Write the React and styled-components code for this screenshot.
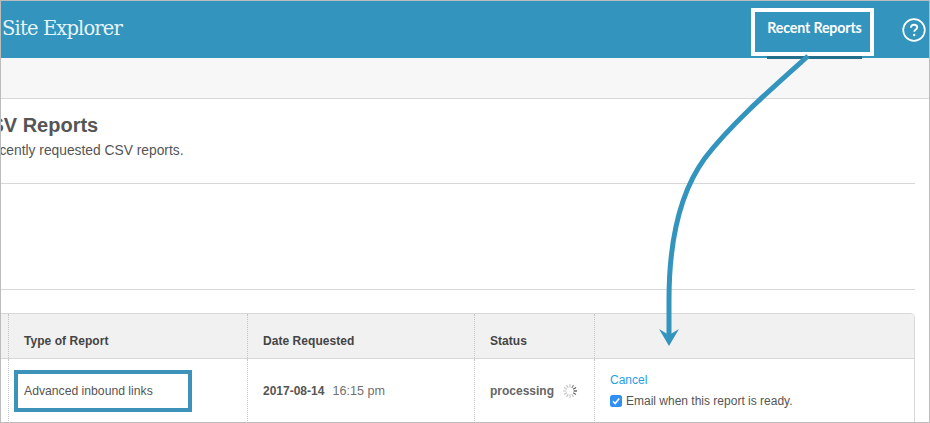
import React from "react";
import styled, { createGlobalStyle } from "styled-components";

const Global = createGlobalStyle`
  html, body { margin: 0; padding: 0; background: #fff; }
  body { font-family: "Liberation Sans", Arial, sans-serif; color: #555; }
`;

const Frame = styled.div`
  position: relative;
  box-sizing: border-box;
  width: 930px;
  height: 423px;
  border: 1px solid #bcbcbc;
  overflow: hidden;
  background: #fff;
`;

const Header = styled.header`
  display: flex;
  align-items: center;
  height: 57px;
  padding: 0 3px 0 1px;
  background: #3394bd;
  color: #fff;
`;

const Brand = styled.div`
  flex: 1;
  font-family: "DejaVu Serif", "Liberation Serif", serif;
  font-size: 19.5px;
  letter-spacing: -0.85px;
  color: #e6f3f8;
  padding-bottom: 2px;
`;

const NavTab = styled.div`
  position: relative;
  box-sizing: border-box;
  width: 123px;
  height: 48px;
  margin-top: 5px;
  margin-right: 28px;
  border: 4px solid #fff;
  display: flex;
  align-items: center;
  justify-content: center;
  font-family: Lato, sans-serif;
  font-weight: 700;
  font-size: 14.2px;
  letter-spacing: -0.15px;
  padding: 0 0 10px 4px;
  &::after {
    content: "";
    position: absolute;
    left: 12px;
    right: 8px;
    bottom: -7px;
    height: 3px;
    background: #236f8c;
  }
`;

const HelpIcon = styled.svg`
  display: block;
  width: 24px;
  height: 24px;
`;

const SubBar = styled.div`
  height: 40px;
  background: #f7f7f7;
  border-bottom: 1px solid #d8d8d8;
`;

const Main = styled.main`
  padding-right: 14px;
`;

const Intro = styled.section`
  height: 85px;
  box-sizing: border-box;
  padding-top: 15px;
  border-bottom: 1px solid #d8d8d8;
`;

const Title = styled.h1`
  margin: 0 0 0 -25px;
  font-size: 20px;
  line-height: 22px;
  font-weight: 700;
  color: #555;
  white-space: nowrap;
`;

const Sub = styled.p`
  margin: 7px 0 0 -102px;
  font-size: 13.8px;
  line-height: 16px;
  color: #555;
  white-space: nowrap;
`;

const Filters = styled.section`
  height: 106px;
  box-sizing: border-box;
  border-bottom: 1px solid #d8d8d8;
`;

const Table = styled.div`
  margin-top: 23px;
  border: 1px solid #d8d8d8;
  border-left: 0;
  border-bottom: 0;
  border-top-right-radius: 5px;
  overflow: hidden;
`;

const Row = styled.div`
  display: grid;
  grid-template-columns: 8px 239px 227px 120px 1fr;
  height: ${(p) => (p.$head ? "44px" : "70px")};
  background: ${(p) => (p.$head ? "#f1f1f1" : "#fff")};
  border-bottom: ${(p) => (p.$head ? "1px solid #d8d8d8" : "0")};
`;

const Cell = styled.div`
  box-sizing: border-box;
  display: flex;
  align-items: ${(p) => (p.$top ? "flex-start" : "center")};
  gap: 8px;
  padding-left: ${(p) => (p.$flush ? "0" : "15px")};
  padding-top: ${(p) => (p.$head ? "10px" : "0")};
  padding-bottom: ${(p) => (p.$head ? "0" : "6px")};
  border-right: ${(p) => (p.$last ? "0" : "1px dotted #c4c4c4")};
  font-size: 12.2px;
  color: #555;
`;

const HeadLabel = styled.span`
  font-weight: 700;
  font-size: 12px;
  letter-spacing: 0.05px;
  color: #444;
`;

const DateText = styled.span`
  font-weight: 700;
  font-size: 12px;
  color: #555;
`;

const TimeText = styled.span`
  font-weight: 400;
  font-size: 12.6px;
  color: #707070;
`;

const Status = styled.span`
  font-weight: 700;
  font-size: 12px;
  color: #666;
`;

const Actions = styled.div`
  padding-top: 14px;
  display: flex;
  flex-direction: column;
  gap: 7px;
`;

const CancelLink = styled.a`
  color: #1f9fe6;
  font-size: 12px;
  line-height: 14px;
`;

const EmailRow = styled.label`
  display: flex;
  align-items: center;
  gap: 4px;
  font-size: 12px;
  line-height: 14px;
  color: #555;
`;

const CheckBox = styled.svg`
  display: block;
  width: 12px;
  height: 12px;
`;

const Spinner = styled.svg`
  display: block;
  width: 16px;
  height: 16px;
`;

const Highlight = styled.div`
  position: absolute;
  left: 13px;
  top: 369px;
  width: 178px;
  height: 42px;
  box-sizing: border-box;
  border: 4px solid #3c92b8;
  pointer-events: none;
`;

const ArrowLayer = styled.svg`
  position: absolute;
  left: -1px;
  top: -1px;
  width: 930px;
  height: 423px;
  pointer-events: none;
`;

const spokes = Array.from({ length: 12 }, (_, i) => i);

export default function App() {
  return (
    <>
      <Global />
      <Frame>
        <Header>
          <Brand>Site Explorer</Brand>
          <NavTab>Recent Reports</NavTab>
          <HelpIcon viewBox="0 0 24 24" fill="none">
            <circle cx="12" cy="12" r="10.8" stroke="#fff" strokeWidth="1.7" />
            <path d="M8.9 9.6c.1-1.9 1.4-2.9 3.2-2.9 1.8 0 3.1 1 3.1 2.6 0 1.2-.6 1.8-1.6 2.5-.9.6-1.3 1-1.3 2" stroke="#fff" strokeWidth="1.9" />
            <circle cx="12.2" cy="17" r="1.2" fill="#fff" />
          </HelpIcon>
        </Header>
        <SubBar />
        <Main>
          <Intro>
            <Title>CSV Reports</Title>
            <Sub>Here are your recently requested CSV reports.</Sub>
          </Intro>
          <Filters />
          <Table>
            <Row $head>
              <Cell $head $flush />
              <Cell $head><HeadLabel>Type of Report</HeadLabel></Cell>
              <Cell $head><HeadLabel>Date Requested</HeadLabel></Cell>
              <Cell $head><HeadLabel>Status</HeadLabel></Cell>
              <Cell $head $last />
            </Row>
            <Row>
              <Cell $flush />
              <Cell>Advanced inbound links</Cell>
              <Cell><DateText>2017-08-14</DateText><TimeText>16:15 pm</TimeText></Cell>
              <Cell>
                <Status>processing</Status>
                <Spinner viewBox="0 0 16 16">
                  {spokes.map((i) => (
                    <line
                      key={i}
                      x1="8"
                      y1="1"
                      x2="8"
                      y2="4.4"
                      stroke={i === 3 ? "#222" : i === 2 ? "#555" : i === 4 ? "#666" : i === 1 ? "#888" : "#c4c4c4"}
                      strokeWidth="1.1"
                      transform={`rotate(${i * 30} 8 8)`}
                    />
                  ))}
                </Spinner>
              </Cell>
              <Cell $last $top>
                <Actions>
                  <CancelLink>Cancel</CancelLink>
                  <EmailRow>
                    <CheckBox viewBox="0 0 12 12">
                      <rect width="12" height="12" rx="2.5" fill="#2f8ff2" />
                      <path d="M3 6.3l2.2 2.2L9.2 3.6" fill="none" stroke="#fff" strokeWidth="1.6" />
                    </CheckBox>
                    Email when this report is ready.
                  </EmailRow>
                </Actions>
              </Cell>
            </Row>
          </Table>
        </Main>
        <Highlight />
        <ArrowLayer viewBox="0 0 930 423">
          <path
            d="M808 56 C 770 90, 730 125, 705 158 C 680 192, 669 240, 669 300 L 669 337"
            fill="none"
            stroke="#3394bd"
            strokeWidth="5"
          />
          <path d="M669 346 L659 329 L669 335 L679 329 Z" fill="#3394bd" />
        </ArrowLayer>
      </Frame>
    </>
  );
}
